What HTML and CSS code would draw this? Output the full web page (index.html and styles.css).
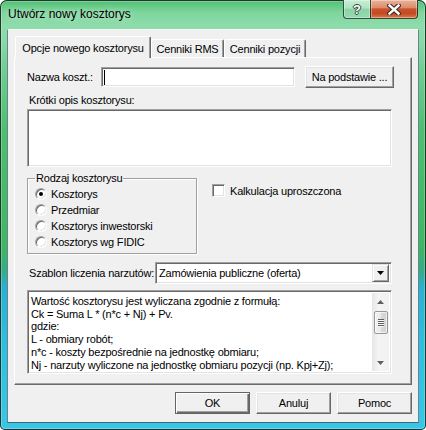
FILE: index.html
```html
<!DOCTYPE html>
<html lang="pl">
<head>
<meta charset="utf-8">
<title>Utwórz nowy kosztorys</title>
<link rel="stylesheet" href="styles.css">
</head>
<body>
<div class="window">
  <div class="titlebar">
    <span class="title">Utwórz nowy kosztorys</span>
    <div class="caption-buttons">
      <div class="cap help"><span class="q">?</span></div>
      <div class="cap close">
        <svg width="14" height="11" viewBox="0 0 14 11">
          <path d="M2.5 1.5 L11.5 9.5 M11.5 1.5 L2.5 9.5" stroke="#3b2e2a" stroke-width="4.6" stroke-linecap="square"/>
          <path d="M2.5 1.5 L11.5 9.5 M11.5 1.5 L2.5 9.5" stroke="#ffffff" stroke-width="2.4" stroke-linecap="square"/>
        </svg>
      </div>
    </div>
  </div>
  <div class="client">
    <div class="tabs">
      <div class="tab active w1">Opcje nowego kosztorysu</div>
      <div class="tab w2">Cenniki RMS</div>
      <div class="tab w3">Cenniki pozycji</div>
    </div>
    <div class="panel">
      <div class="row name-row">
        <span class="lbl name-lbl">Nazwa koszt.:</span>
        <div class="field name-field"><span class="caret"></span></div>
        <div class="btn podst">Na podstawie ...</div>
      </div>
      <div class="lbl desc-lbl">Krótki opis kosztorysu:</div>
      <div class="field desc"></div>
      <div class="row kind-row">
        <fieldset class="group">
          <legend>Rodzaj kosztorysu</legend>
          <div class="radio-row"><span class="radio checked"></span>Kosztorys</div>
          <div class="radio-row"><span class="radio"></span>Przedmiar</div>
          <div class="radio-row"><span class="radio"></span>Kosztorys inwestorski</div>
          <div class="radio-row"><span class="radio"></span>Kosztorys wg FIDIC</div>
        </fieldset>
        <div class="check-row"><span class="checkbox"></span>Kalkulacja uproszczona</div>
      </div>
      <div class="row tpl-row">
        <span class="lbl tpl-lbl">Szablon liczenia narzutów:</span>
        <div class="field combo">
          <span class="combo-text">Zamówienia publiczne (oferta)</span>
          <span class="combo-btn">
            <svg width="7" height="4" viewBox="0 0 7 4"><polygon points="0,0 7,0 3.5,4" fill="#000"/></svg>
          </span>
        </div>
      </div>
      <div class="field info">
        <div class="info-text">
          <div>Wartość kosztorysu jest wyliczana zgodnie z formułą:</div>
          <div>Ck = Suma L * (n*c + Nj) + Pv.</div>
          <div>gdzie:</div>
          <div>L - obmiary robót;</div>
          <div>n*c - koszty bezpośrednie na jednostkę obmiaru;</div>
          <div>Nj - narzuty wyliczone na jednostkę obmiaru pozycji (np. Kpj+Zj);</div>
        </div>
        <div class="scrollbar">
          <div class="sb-btn"><svg width="7" height="4" viewBox="0 0 7 4"><polygon points="0,4 7,4 3.5,0" fill="#606060"/></svg></div>
          <div class="sb-track"><div class="sb-thumb"><span class="grip"></span></div></div>
          <div class="sb-btn"><svg width="7" height="4" viewBox="0 0 7 4"><polygon points="0,0 7,0 3.5,4" fill="#606060"/></svg></div>
        </div>
      </div>
    </div>
    <div class="footer">
      <div class="btn default">OK</div>
      <div class="btn">Anuluj</div>
      <div class="btn">Pomoc</div>
    </div>
  </div>
</div>
</body>
</html>
```
FILE: styles.css
```css
* { box-sizing: border-box; }
html, body { margin: 0; padding: 0; }
body {
  width: 426px;
  height: 430px;
  overflow: hidden;
  background: #ffffff;
  font-family: "Liberation Sans", Arial, sans-serif;
  font-size: 11px;
  letter-spacing: -0.2px;
  color: #000;
}

.window {
  width: 426px;
  height: 430px;
  padding: 0 7px 7px;
  display: flex;
  flex-direction: column;
  border-radius: 7px 7px 5px 5px;
  background: linear-gradient(to bottom,
    #4cbf70 0%, #7fd69e 3%, #8edcab 6%, #86d9a6 10%, #6fcf92 16%,
    #4cc070 30%, #3db663 58%, #33ad86 63%, #27b2d4 67%, #2ebfe0 80%, #38c7e6 100%);
  box-shadow: inset 0 0 0 1px #22362c, inset 0 0 0 2px rgba(255,255,255,0.25);
}

.titlebar {
  height: 29px;
  display: flex;
  align-items: flex-start;
  justify-content: space-between;
}
.title {
  font-size: 12px;
  letter-spacing: 0;
  line-height: 15px;
  margin-top: 7px;
  padding-left: 1px;
  text-shadow: 0 0 6px rgba(255,255,255,0.8);
}
.caption-buttons {
  display: flex;
  margin-right: 1px;
}
.cap {
  height: 19px;
  display: flex;
  align-items: center;
  justify-content: center;
  border: 1px solid rgba(22,40,30,0.8);
  border-top: none;
  box-shadow: inset 0 0 0 1px rgba(255,255,255,0.35);
}
.help {
  width: 27px;
  border-right: none;
  border-radius: 0 0 0 4px;
  background: linear-gradient(to bottom, #c6eed5 0%, #ade4c2 45%, #8ad4a6 52%, #96dbb0 100%);
}
.q {
  color: #fff;
  font-weight: bold;
  font-size: 13px;
  line-height: 13px;
  letter-spacing: 0;
  text-shadow: -1px 0 #2f4238, 1px 0 #2f4238, 0 -1px #2f4238, 0 1px #2f4238;
}
.close {
  width: 48px;
  border-radius: 0 0 4px 0;
  background: linear-gradient(to bottom, #ebb49d 0%, #dd8c6c 42%, #c9532c 50%, #c44a22 75%, #d9794e 100%);
}
.close svg { display: block; }

.client {
  flex: 1;
  background: #f0f0f0;
  border: 1px solid;
  border-color: rgba(255,255,255,0.6) rgba(0,40,60,0.55) rgba(0,40,70,0.7) rgba(0,40,60,0.55);
  padding: 6px 6px 8px;
  display: flex;
  flex-direction: column;
}

.tabs {
  display: flex;
  align-items: flex-end;
  height: 21px;
  padding-left: 1px;
  position: relative;
  z-index: 1;
}
.tab {
  height: 18px;
  padding-top: 1px;
  line-height: 16px;
  text-align: center;
  white-space: nowrap;
  background: #f0f0f0;
  border: 1px solid;
  border-bottom: none;
  border-color: #ffffff #696969 transparent #ffffff;
  box-shadow: inset -1px 0 #a0a0a0;
  border-radius: 2px 2px 0 0;
}
.tab.active {
  height: 22px;
  margin-bottom: -1px;
  padding-top: 2px;
  line-height: 19px;
}
.w1 { width: 136px; }
.w2 { width: 73px; }
.w3 { width: 82px; }

.panel {
  border: 1px solid;
  border-color: #ffffff #696969 #696969 #ffffff;
  box-shadow: inset -1px -1px #a0a0a0;
  padding: 8px 0 10px 12px;
}

.row { display: flex; }
.name-row { align-items: center; height: 22px; }
.lbl { white-space: nowrap; }
.name-lbl { width: 74px; }

.field {
  background: #fff;
  border: 1px solid;
  border-color: #a0a0a0 #ffffff #ffffff #a0a0a0;
  box-shadow: inset 1px 1px #696969, inset -1px -1px #e3e3e3;
}
.name-field {
  width: 194px;
  height: 20px;
  display: flex;
  align-items: center;
  padding-left: 2px;
}
.caret {
  width: 1px;
  height: 15px;
  background: #000;
}

.btn {
  width: 75px;
  height: 22px;
  display: flex;
  align-items: center;
  justify-content: center;
  background: #f0f0f0;
  border: 1px solid;
  border-color: #ffffff #696969 #696969 #ffffff;
  box-shadow: inset -1px -1px #a0a0a0, inset 1px 1px #e3e3e3;
  white-space: nowrap;
}
.btn.default {
  border: 1px solid #646464;
  box-shadow: inset 1px 1px #ffffff, inset -1px -1px #696969, inset -2px -2px #a0a0a0;
}
.podst { width: 89px; margin-left: 10px; }

.desc-lbl {
  margin-top: 6px;
  line-height: 13px;
  padding-left: 2px;
}
.desc {
  width: 365px;
  height: 58px;
  margin-top: 2px;
}

.kind-row {
  margin-top: 5px;
  align-items: flex-start;
}
.group {
  width: 170px;
  margin: 0;
  padding: 1px 0 3px 7px;
  border: 1px solid #a0a0a0;
  box-shadow: inset 1px 1px #ffffff, 1px 1px #ffffff;
  min-width: 0;
}
.group legend {
  padding: 0 1px;
  margin: 0;
  line-height: 13px;
}
.radio-row {
  display: flex;
  align-items: center;
  height: 16px;
  white-space: nowrap;
}
.radio {
  width: 12px;
  height: 12px;
  border-radius: 50%;
  border: 1px solid;
  border-color: #a0a0a0 #ffffff #ffffff #a0a0a0;
  box-shadow: inset 1px 1px #696969, inset -1px -1px #e3e3e3;
  background: #fff;
  margin-right: 4px;
  display: flex;
  align-items: center;
  justify-content: center;
}
.radio.checked::after {
  content: "";
  width: 4px;
  height: 4px;
  border-radius: 50%;
  background: #000;
}

.check-row {
  display: flex;
  align-items: center;
  height: 13px;
  margin-left: 15px;
  margin-top: 12px;
  white-space: nowrap;
}
.checkbox {
  width: 13px;
  height: 13px;
  background: #fff;
  border: 1px solid;
  border-color: #a0a0a0 #ffffff #ffffff #a0a0a0;
  box-shadow: inset 1px 1px #696969, inset -1px -1px #e3e3e3;
  margin-right: 5px;
}

.tpl-row {
  margin-top: 8px;
  align-items: center;
  height: 22px;
}
.tpl-lbl {
  width: 128px;
  padding-left: 2px;
}
.combo {
  width: 237px;
  height: 22px;
  display: flex;
  align-items: center;
  padding: 2px 2px 2px 2px;
}
.combo-text {
  flex: 1;
  padding-left: 1px;
  white-space: nowrap;
}
.combo-btn {
  width: 17px;
  height: 18px;
  display: flex;
  align-items: center;
  justify-content: center;
  background: #f0f0f0;
  border: 1px solid;
  border-color: #e3e3e3 #696969 #696969 #e3e3e3;
  box-shadow: inset 1px 1px #ffffff, inset -1px -1px #a0a0a0;
}
.combo-btn svg, .sb-btn svg { display: block; }

.info {
  width: 365px;
  height: 84px;
  margin-top: 6px;
  display: flex;
  padding: 2px 2px 2px 2px;
}
.info-text {
  flex: 1;
  overflow: hidden;
  padding: 2px 0 0 1px;
  line-height: 12.7px;
  white-space: nowrap;
}
.scrollbar {
  width: 17px;
  display: flex;
  flex-direction: column;
  background: linear-gradient(to right, #e6e6e6, #f4f4f4 40%, #f1f1f1 100%);
}
.sb-btn {
  height: 17px;
  display: flex;
  align-items: center;
  justify-content: center;
}
.sb-track {
  flex: 1;
  padding-top: 1px;
}
.sb-thumb {
  height: 23px;
  margin: 0 1px 0 2px;
  border: 1px solid #979797;
  border-radius: 2px;
  background: linear-gradient(to right, #f3f3f3, #e8e8e8 50%, #d9d9d9 51%, #d2d2d2);
  box-shadow: inset 0 0 0 1px rgba(255,255,255,0.6);
  display: flex;
  align-items: center;
  justify-content: center;
}
.grip {
  width: 6px;
  height: 8px;
  background: repeating-linear-gradient(to bottom, #5e5e5e 0 1px, #f6f6f6 1px 2px);
}

.footer {
  display: flex;
  justify-content: flex-end;
  gap: 6px;
  margin-top: 7px;
}
```
